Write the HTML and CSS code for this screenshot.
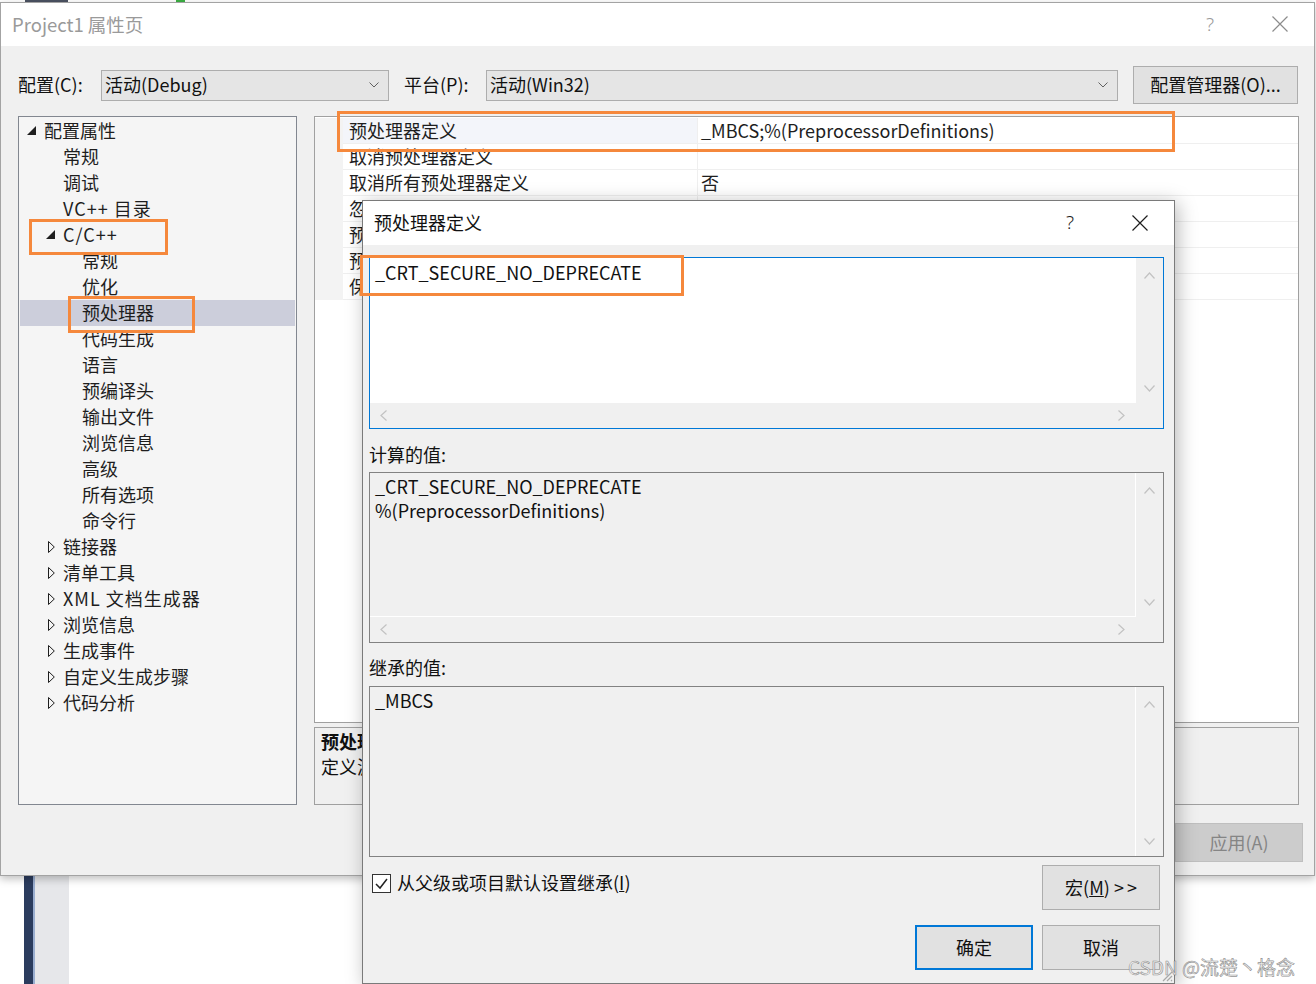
FILE: index.html
```html
<!DOCTYPE html>
<html lang="zh-CN">
<head>
<meta charset="utf-8">
<title>Project1 属性页</title>
<link rel="stylesheet" href="styles.css">
</head>
<body>
<div class="screen">
  <div class="topstrip"><span class="ts-dark"></span><span class="ts-green"></span></div>

  <div class="win">
    <div class="titlebar">
      <span class="title">Project1 属性页</span>
      <span class="tb-help">?</span>
      <svg class="tb-close" width="16" height="16" viewBox="0 0 16 16"><path d="M0.5 0.5 L15.5 15.5 M15.5 0.5 L0.5 15.5" stroke="#8c8c8c" stroke-width="1.2" fill="none"/></svg>
    </div>
    <div class="winbody">
      <div class="cfgrow">
        <span class="lbl lbl-cfg">配置(C):</span>
        <div class="combo combo-cfg"><span class="combo-text">活动(Debug)</span><svg class="chev" width="10" height="6" viewBox="0 0 10 6"><polyline points="0.5,0.5 5,5 9.5,0.5" fill="none" stroke="#606060" stroke-width="1"/></svg></div>
        <span class="lbl lbl-plat">平台(P):</span>
        <div class="combo combo-plat"><span class="combo-text">活动(Win32)</span><svg class="chev" width="10" height="6" viewBox="0 0 10 6"><polyline points="0.5,0.5 5,5 9.5,0.5" fill="none" stroke="#606060" stroke-width="1"/></svg></div>
        <div class="btn btn-mgr">配置管理器(O)...</div>
      </div>

      <div class="panes">
        <div class="tree">
          <div class="row l0"><span class="tog"><svg class="tri-open" width="9" height="9" viewBox="0 0 9 9"><polygon points="9,0 9,9 0,9" fill="#1e1e1e"/></svg></span><span>配置属性</span></div>
          <div class="row l1"><span class="tog"></span><span>常规</span></div>
          <div class="row l1"><span class="tog"></span><span>调试</span></div>
          <div class="row l1"><span class="tog"></span><span class="wide">VC++ 目录</span></div>
          <div class="row l1"><span class="tog"><svg class="tri-open" width="9" height="9" viewBox="0 0 9 9"><polygon points="9,0 9,9 0,9" fill="#1e1e1e"/></svg></span><span class="wide">C/C++</span></div>
          <div class="row l2"><span class="tog"></span><span>常规</span></div>
          <div class="row l2"><span class="tog"></span><span>优化</span></div>
          <div class="row l2 sel"><span class="tog"></span><span>预处理器</span></div>
          <div class="row l2"><span class="tog"></span><span>代码生成</span></div>
          <div class="row l2"><span class="tog"></span><span>语言</span></div>
          <div class="row l2"><span class="tog"></span><span>预编译头</span></div>
          <div class="row l2"><span class="tog"></span><span>输出文件</span></div>
          <div class="row l2"><span class="tog"></span><span>浏览信息</span></div>
          <div class="row l2"><span class="tog"></span><span>高级</span></div>
          <div class="row l2"><span class="tog"></span><span>所有选项</span></div>
          <div class="row l2"><span class="tog"></span><span>命令行</span></div>
          <div class="row l1"><span class="tog"><svg class="tri-closed" width="7" height="12" viewBox="0 0 7 12"><polygon points="0.5,0.5 6.3,6 0.5,11.5" fill="none" stroke="#1e1e1e" stroke-width="1"/></svg></span><span>链接器</span></div>
          <div class="row l1"><span class="tog"><svg class="tri-closed" width="7" height="12" viewBox="0 0 7 12"><polygon points="0.5,0.5 6.3,6 0.5,11.5" fill="none" stroke="#1e1e1e" stroke-width="1"/></svg></span><span>清单工具</span></div>
          <div class="row l1"><span class="tog"><svg class="tri-closed" width="7" height="12" viewBox="0 0 7 12"><polygon points="0.5,0.5 6.3,6 0.5,11.5" fill="none" stroke="#1e1e1e" stroke-width="1"/></svg></span><span class="wide">XML 文档生成器</span></div>
          <div class="row l1"><span class="tog"><svg class="tri-closed" width="7" height="12" viewBox="0 0 7 12"><polygon points="0.5,0.5 6.3,6 0.5,11.5" fill="none" stroke="#1e1e1e" stroke-width="1"/></svg></span><span>浏览信息</span></div>
          <div class="row l1"><span class="tog"><svg class="tri-closed" width="7" height="12" viewBox="0 0 7 12"><polygon points="0.5,0.5 6.3,6 0.5,11.5" fill="none" stroke="#1e1e1e" stroke-width="1"/></svg></span><span>生成事件</span></div>
          <div class="row l1"><span class="tog"><svg class="tri-closed" width="7" height="12" viewBox="0 0 7 12"><polygon points="0.5,0.5 6.3,6 0.5,11.5" fill="none" stroke="#1e1e1e" stroke-width="1"/></svg></span><span>自定义生成步骤</span></div>
          <div class="row l1"><span class="tog"><svg class="tri-closed" width="7" height="12" viewBox="0 0 7 12"><polygon points="0.5,0.5 6.3,6 0.5,11.5" fill="none" stroke="#1e1e1e" stroke-width="1"/></svg></span><span>代码分析</span></div>
        </div>

        <div class="rightcol">
          <div class="grid">
            <div class="grow">
              <div class="gut"></div><div class="gname cur">预处理器定义</div><div class="gval">_MBCS;%(PreprocessorDefinitions)</div>
            </div>
            <div class="grow">
              <div class="gut"></div><div class="gname">取消预处理器定义</div><div class="gval"></div>
            </div>
            <div class="grow">
              <div class="gut"></div><div class="gname">取消所有预处理器定义</div><div class="gval">否</div>
            </div>
            <div class="grow">
              <div class="gut"></div><div class="gname">忽略标准包含路径</div><div class="gval">否</div>
            </div>
            <div class="grow">
              <div class="gut"></div><div class="gname">预处理到文件</div><div class="gval">否</div>
            </div>
            <div class="grow">
              <div class="gut"></div><div class="gname">预处理取消显示行号</div><div class="gval">否</div>
            </div>
            <div class="grow">
              <div class="gut"></div><div class="gname">保留注释</div><div class="gval">否</div>
            </div>
          </div>
          <div class="desc">
            <div class="desc-title">预处理器定义</div>
            <div class="desc-text">定义源文件的预处理符号。</div>
          </div>
        </div>
      </div>

      <div class="btnrow">
        <div class="btn btn-main">确定</div>
        <div class="btn btn-main">取消</div>
        <div class="btn btn-main btn-disabled">应用(A)</div>
      </div>
    </div>
  </div>

  <div class="behind"><span class="navy"></span><span class="graystrip"></span></div>

  <div class="dialog">
    <div class="dlg-title">
      <span class="dlg-caption">预处理器定义</span>
      <span class="dlg-help">?</span>
      <svg class="dlg-close" width="16" height="16" viewBox="0 0 16 16"><path d="M0.5 0.5 L15.5 15.5 M15.5 0.5 L0.5 15.5" stroke="#1e1e1e" stroke-width="1.2" fill="none"/></svg>
    </div>
    <div class="dlg-body">
      <div class="ebox ebox-edit">
        <div class="etext etext-white">_CRT_SECURE_NO_DEPRECATE</div>
        <div class="vscroll">
          <svg width="11" height="7" viewBox="0 0 11 7"><polyline points="0.5,6.5 5.5,1 10.5,6.5" fill="none" stroke="#c2c2c2" stroke-width="1.2"/></svg>
          <svg width="11" height="7" viewBox="0 0 11 7"><polyline points="0.5,0.5 5.5,6 10.5,0.5" fill="none" stroke="#c2c2c2" stroke-width="1.2"/></svg>
        </div>
        <div class="hscroll">
          <svg width="7" height="11" viewBox="0 0 7 11"><polyline points="6.5,0.5 1,5.5 6.5,10.5" fill="none" stroke="#c2c2c2" stroke-width="1.2"/></svg>
          <svg width="7" height="11" viewBox="0 0 7 11"><polyline points="0.5,0.5 6,5.5 0.5,10.5" fill="none" stroke="#c2c2c2" stroke-width="1.2"/></svg>
        </div>
        <div class="corner"></div>
      </div>

      <div class="dlabel dlabel-calc">计算的值:</div>
      <div class="ebox ebox-ro">
        <div class="etext etext-ro">_CRT_SECURE_NO_DEPRECATE<br>%(PreprocessorDefinitions)</div>
        <div class="vscroll">
          <svg width="11" height="7" viewBox="0 0 11 7"><polyline points="0.5,6.5 5.5,1 10.5,6.5" fill="none" stroke="#c2c2c2" stroke-width="1.2"/></svg>
          <svg width="11" height="7" viewBox="0 0 11 7"><polyline points="0.5,0.5 5.5,6 10.5,0.5" fill="none" stroke="#c2c2c2" stroke-width="1.2"/></svg>
        </div>
        <div class="hscroll">
          <svg width="7" height="11" viewBox="0 0 7 11"><polyline points="6.5,0.5 1,5.5 6.5,10.5" fill="none" stroke="#c2c2c2" stroke-width="1.2"/></svg>
          <svg width="7" height="11" viewBox="0 0 7 11"><polyline points="0.5,0.5 6,5.5 0.5,10.5" fill="none" stroke="#c2c2c2" stroke-width="1.2"/></svg>
        </div>
        <div class="corner"></div>
      </div>

      <div class="dlabel dlabel-inh">继承的值:</div>
      <div class="ebox ebox-ro ebox-noh">
        <div class="etext etext-ro">_MBCS</div>
        <div class="vscroll">
          <svg width="11" height="7" viewBox="0 0 11 7"><polyline points="0.5,6.5 5.5,1 10.5,6.5" fill="none" stroke="#c2c2c2" stroke-width="1.2"/></svg>
          <svg width="11" height="7" viewBox="0 0 11 7"><polyline points="0.5,0.5 5.5,6 10.5,0.5" fill="none" stroke="#c2c2c2" stroke-width="1.2"/></svg>
        </div>
      </div>

      <div class="dlg-rowa">
        <div class="chk">
          <span class="chkbox"><svg width="17" height="17" viewBox="0 0 17 17"><polyline points="3,9 7,13 14,4" fill="none" stroke="#222" stroke-width="1.5"/></svg></span>
          <span class="chklbl">从父级或项目默认设置继承(<u>I</u>)</span>
        </div>
        <div class="btn dbtn">宏(<u>M</u>)&nbsp;<span class="gtgt">&gt;&gt;</span></div>
      </div>
      <div class="dlg-rowb">
        <div class="btn dbtn dbtn-default">确定</div>
        <div class="btn dbtn">取消</div>
      </div>
    </div>
    <svg class="grip" width="13" height="13" viewBox="0 0 13 13"><path d="M12 3 L3 12 M12 7 L7 12 M12 11 L11 12" stroke="#a8a8a8" stroke-width="1.2" fill="none"/></svg>
  </div>

  <div class="mark mark-cc"></div>
  <div class="mark mark-pre"></div>
  <div class="mark mark-row"></div>
  <div class="mark mark-dlg"></div>

  <div class="watermark">CSDN @流楚丶格念</div>
</div>
</body>
</html>
```

FILE: styles.css
```css
* { box-sizing: border-box; }
html, body { margin: 0; padding: 0; }
body {
  background: #fff;
  font-family: "Noto Sans CJK SC", "Noto Sans", sans-serif;
  font-size: 18px;
  color: #111;
}
.screen {
  position: relative;
  width: 1316px;
  height: 984px;
  overflow: hidden;
  background: #fff;
}

/* background strips */
.topstrip { height: 2px; display: flex; }
.ts-dark { margin-left: 25px; width: 43px; background: #4b5262; }
.ts-green { margin-left: 108px; width: 9px; background: #3cb043; }

.behind { display: flex; height: 120px; }
.navy { margin-left: 24px; width: 11px; background: #2b3c5e; border-right: 2px solid #9aaed0; }
.graystrip { width: 34px; background: #e6e7ea; }

/* main window */
.win {
  position: relative;
  z-index: 1;
  width: 1315px;
  height: 874px;
  border: 1px solid #a3a3a3;
  background: #f0f0f0;
  box-shadow: 0 3px 8px rgba(0,0,0,.25);
  display: flex;
  flex-direction: column;
}
.titlebar {
  height: 43px;
  background: #fff;
  display: flex;
  align-items: center;
  padding-left: 11px;
  padding-bottom: 1px;
  flex: none;
}
.title { color: #9a9a9a; font-size: 18.5px; }
.tb-help {
  margin-left: auto;
  width: 20px;
  text-align: center;
  color: #9a9a9a;
  font-family: "Noto Sans", sans-serif;
  font-size: 19px;
  font-weight: 300;
  margin-right: 52px;
}
.tb-close { margin-right: 26px; }

.winbody { flex: 1; display: flex; flex-direction: column; }

.cfgrow {
  display: flex;
  align-items: center;
  height: 38px;
  margin-top: 20px;
  padding: 0 16px 0 17px;
}
.lbl { white-space: nowrap; padding-bottom: 2px; }
.lbl-cfg { width: 83px; }
.lbl-plat { width: 82px; margin-left: 15px; }
.combo {
  height: 31px;
  background: #e5e5e5;
  border: 1px solid #adadad;
  display: flex;
  align-items: center;
  padding-left: 3px;
  padding-bottom: 2px;
}
.combo-text { flex: 1; }
.chev { margin-right: 9px; margin-top: 2px; }
.combo-cfg { width: 288px; }
.combo-plat { flex: 1; }

.btn {
  background: #e1e1e1;
  border: 1px solid #adadad;
  display: flex;
  align-items: center;
  justify-content: center;
  white-space: nowrap;
  padding-bottom: 2px;
}
.btn-mgr { width: 165px; height: 38px; margin-left: 15px; }

.panes {
  display: flex;
  height: 689px;
  margin-top: 12px;
  padding-left: 17px;
}

/* tree */
.tree {
  width: 279px;
  border: 1px solid #828790;
  background: #f5f5f5;
  padding: 1px;
}
.row {
  height: 26px;
  line-height: 24px;
  padding-bottom: 2px;
  display: flex;
  align-items: center;
  white-space: nowrap;
  color: #1e1e1e;
}
.row.l0 { padding-left: 5px; }
.row.l1 { padding-left: 24px; }
.row.l2 { padding-left: 43px; }
.row.sel { background: #cccedb; }
.wide { letter-spacing: 1px; }
.tog { width: 19px; flex: none; display: flex; align-items: center; }
.tri-open { margin-left: 2px; margin-top: 1px; }
.tri-closed { margin-left: 4px; margin-top: 2px; }

/* property grid */
.rightcol {
  margin-left: 17px;
  width: 985px;
  display: flex;
  flex-direction: column;
}
.grid {
  height: 607px;
  border: 1px solid #a0a0a0;
  background: #fff;
  padding-top: 1px;
}
.grow {
  display: grid;
  grid-template-columns: 28px 354px 1fr;
  height: 26px;
  line-height: 24px;
  color: #1e1e1e;
}
.gut { background: #f3f3f3; }
.gname {
  padding-left: 6px;
  border-bottom: 1px solid #efefef;
  white-space: nowrap;
}
.gname.cur { background: #f3f5fa; }
.gval {
  padding-left: 3px;
  border-bottom: 1px solid #efefef;
  border-left: 1px solid #efefef;
  white-space: nowrap;
}

.desc {
  margin-top: 4px;
  height: 78px;
  border: 1px solid #a0a0a0;
  background: #f0f0f0;
  padding: 1px 6px;
  line-height: 25px;
}
.desc-title { font-weight: bold; }

.btnrow {
  display: flex;
  justify-content: flex-end;
  gap: 9px;
  margin-top: 18px;
  padding-right: 11px;
}
.btn-main { width: 128px; height: 39px; }
.btn-disabled { background: #cccccc; border-color: #bfbfbf; color: #858585; }

/* dialog */
.dialog {
  position: absolute;
  left: 362px;
  top: 200px;
  width: 813px;
  height: 784px;
  z-index: 5;
  border: 1px solid #7a7a7a;
  background: #f0f0f0;
  box-shadow: 3px 3px 18px rgba(0,0,0,.28);
  display: flex;
  flex-direction: column;
}
.dlg-title {
  height: 44px;
  flex: none;
  background: #fff;
  display: flex;
  align-items: center;
  padding-left: 11px;
  padding-bottom: 2px;
}
.dlg-caption { color: #111; }
.dlg-help {
  margin-left: auto;
  width: 20px;
  text-align: center;
  font-family: "Noto Sans", sans-serif;
  font-size: 19px;
  font-weight: 300;
  color: #1e1e1e;
  margin-right: 52px;
}
.dlg-close { margin-right: 26px; margin-top: 1px; }

.dlg-body {
  flex: 1;
  display: flex;
  flex-direction: column;
  padding: 12px 10px 0 6px;
}
.ebox {
  height: 172px;
  flex: none;
  display: grid;
  grid-template-columns: 1fr 27px;
  grid-template-rows: 1fr 25px;
  border: 1px solid #828282;
  background: #f0f0f0;
}
.ebox-edit { border-color: #0078d7; }
.ebox-ro { height: 171px; }
.ebox-noh { grid-template-rows: 1fr; }
.etext {
  padding: 2px 0 0 5px;
  line-height: 24px;
  white-space: nowrap;
  color: #111;
}
.etext-white { background: #fff; }
.etext-ro { padding-top: 1px; border-right: 1px solid #fff; border-bottom: 1px solid #fff; }
.ebox-noh .etext-ro { border-bottom: 0; }
.vscroll {
  display: flex;
  flex-direction: column;
  justify-content: space-between;
  align-items: center;
  padding: 14px 0 11px;
}
.hscroll {
  display: flex;
  justify-content: space-between;
  align-items: center;
  padding: 0 11px 0 10px;
}
.corner { background: #f0f0f0; }

.dlabel { line-height: 22px; height: 22px; color: #111; }
.dlabel-calc { margin-top: 14px; margin-bottom: 7px; }
.dlabel-inh { margin-top: 13px; margin-bottom: 8px; }

.dlg-rowa {
  display: flex;
  align-items: flex-start;
  margin-top: 8px;
  padding-right: 4px;
}
.chk { display: flex; align-items: center; margin-top: 7px; margin-left: 3px; }
.chkbox {
  width: 19px;
  height: 19px;
  border: 1px solid #333;
  background: #fff;
  display: flex;
  align-items: center;
  justify-content: center;
}
.chklbl { margin-left: 6px; line-height: 20px; padding-bottom: 2px; }
.dbtn { width: 118px; height: 45px; margin-left: auto; }
.gtgt { letter-spacing: 3px; margin-right: -3px; }
.dlg-rowb {
  display: flex;
  justify-content: flex-end;
  gap: 9px;
  margin-top: 15px;
  padding-right: 4px;
}
.dlg-rowb .dbtn { margin-left: 0; }
.dbtn-default { border: 2px solid #0078d7; }
.grip { position: absolute; right: 1px; bottom: 1px; }

/* orange annotation boxes */
.mark {
  position: absolute;
  z-index: 10;
  border: 3px solid #f5883c;
}
.mark-cc { left: 29px; top: 219px; width: 139px; height: 36px; }
.mark-pre { left: 68px; top: 296px; width: 127px; height: 37px; }
.mark-row { left: 337px; top: 111px; width: 838px; height: 41px; }
.mark-dlg { left: 360px; top: 255px; width: 324px; height: 41px; }

.watermark {
  position: absolute;
  z-index: 12;
  left: 1128px;
  top: 953px;
  font-size: 19px;
  color: rgba(236,236,236,.85);
  -webkit-text-stroke: 0.6px rgba(110,110,110,.75);
  white-space: nowrap;
}
```
